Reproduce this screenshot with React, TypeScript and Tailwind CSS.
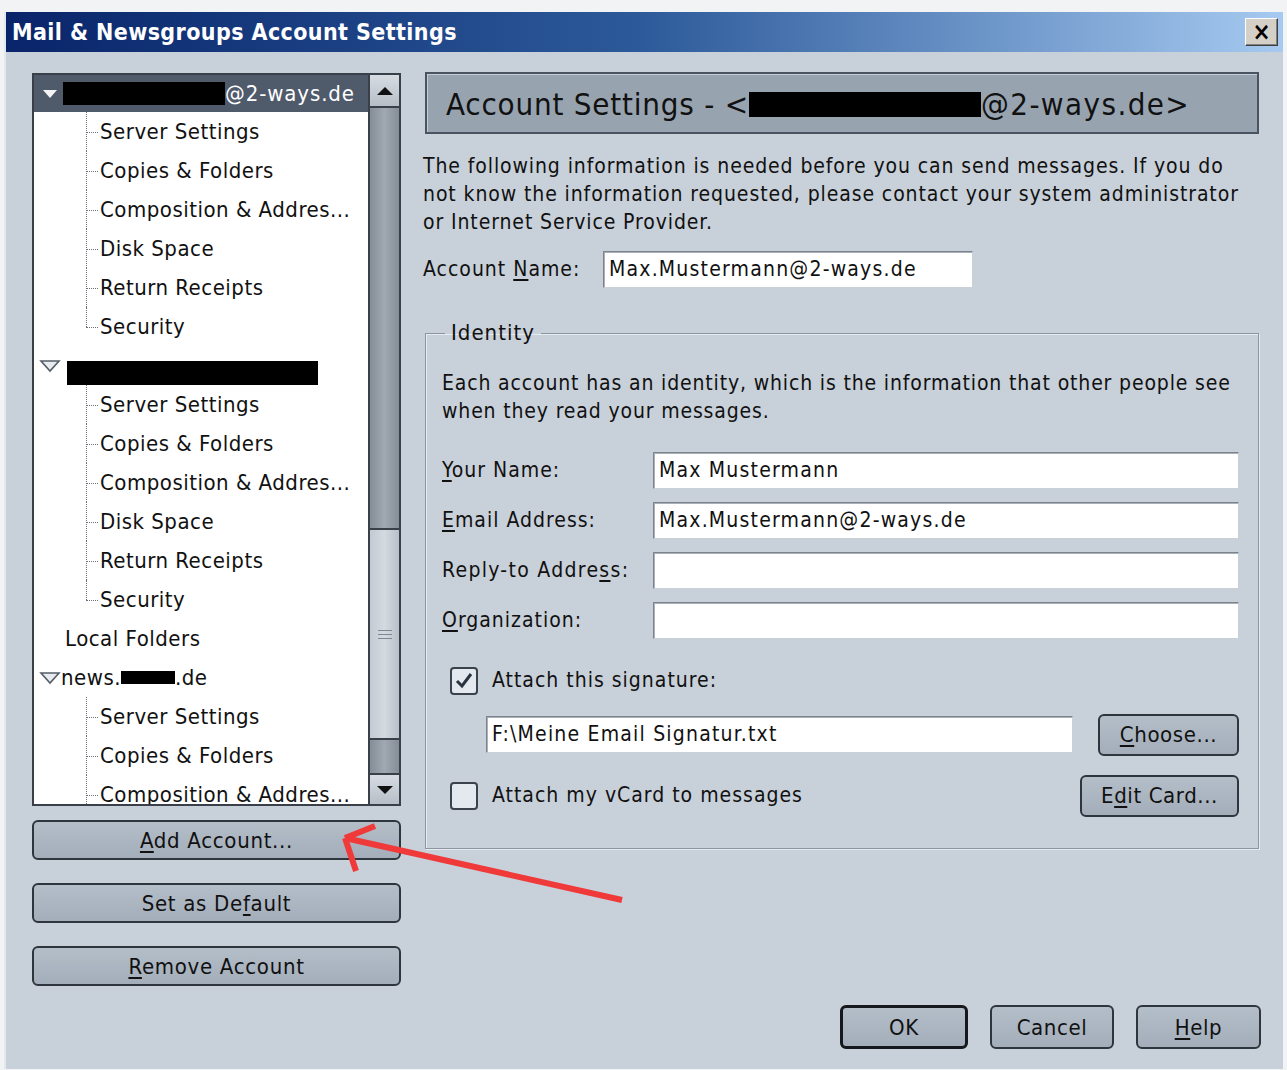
import React from "react";

const FONT = '"DejaVu Sans Condensed", "Liberation Sans", sans-serif';

function U({ children }: { children: React.ReactNode }) {
  return <span className="underline underline-offset-[3px]">{children}</span>;
}

function Bar({ w, h = 23 }: { w: number; h?: number }) {
  return <span className="inline-block bg-black align-middle" style={{ width: w, height: h }} />;
}

function TriangleOutline() {
  return (
    <svg width="22" height="14" viewBox="0 0 22 14" className="shrink-0">
      <path d="M2 2 L20 2 L11 12 Z" fill="#e8ecf0" stroke="#555d68" strokeWidth="1.6" />
    </svg>
  );
}

function Child({ label, last = false }: { label: string; last?: boolean }) {
  return (
    <div className="flex h-[39px] shrink-0 items-center">
      <div className="w-[52px] shrink-0" />
      <div className="relative h-full w-[14px] shrink-0">
        <div
          className={`absolute left-0 top-0 border-l border-dotted border-[#6b727c] ${last ? "h-1/2" : "h-full"}`}
        />
        <div className="absolute left-0 top-1/2 w-[12px] border-t border-dotted border-[#6b727c]" />
      </div>
      <span className="whitespace-nowrap">{label}</span>
    </div>
  );
}

function Children() {
  return (
    <>
      <Child label="Server Settings" />
      <Child label="Copies & Folders" />
      <Child label="Composition & Addres..." />
      <Child label="Disk Space" />
      <Child label="Return Receipts" />
      <Child label="Security" last />
    </>
  );
}

function SideButton({ children }: { children: React.ReactNode }) {
  return (
    <button className="flex h-[40px] w-full items-center justify-center rounded-[6px] border-2 border-[#2f353d] bg-gradient-to-b from-[#b4bec9] to-[#a3aeba] text-[22px] tracking-[0.7px] text-[#111]">
      {children}
    </button>
  );
}

function Button({
  children,
  w,
  h = 42,
  thick = false,
}: {
  children: React.ReactNode;
  w: number;
  h?: number;
  thick?: boolean;
}) {
  return (
    <button
      className={`flex shrink-0 items-center justify-center rounded-[6px] bg-gradient-to-b from-[#b4bec9] to-[#a3aeba] text-[22px] tracking-[0.6px] text-[#111] ${
        thick ? "border-[3px] border-[#15181c]" : "border-2 border-[#2f353d]"
      }`}
      style={{ width: w, height: h }}
    >
      {children}
    </button>
  );
}

function Field({ value, w }: { value?: string; w?: number }) {
  return (
    <div
      className="flex h-[37px] items-center whitespace-nowrap border border-[#7c838c] border-b-[#c9d0d7] border-r-[#c9d0d7] bg-white pl-[5px] text-[21px] tracking-[1.2px] text-[#111] shadow-[inset_1px_1px_0_#a9b0b8]"
      style={w ? { width: w } : { flex: 1 }}
    >
      {value}
    </div>
  );
}

function Check({ checked }: { checked?: boolean }) {
  return (
    <div className="flex h-[28px] w-[28px] shrink-0 items-center justify-center rounded-[4px] border-2 border-[#3b424b] bg-[#e3e9ee]">
      {checked && (
        <svg width="20" height="20" viewBox="0 0 20 20">
          <path d="M3 10 L8 15 L17 3" fill="none" stroke="#2b3440" strokeWidth="3" />
        </svg>
      )}
    </div>
  );
}

export default function App() {
  return (
    <div
      className="relative h-[1070px] w-[1287px] overflow-hidden bg-[#f2f3f4] text-[#111]"
      style={{ fontFamily: FONT }}
    >
      <div className="ml-[4px] mt-[12px] flex h-[1057px] w-[1279px] flex-col border-l-2 border-[#e3e8ee] bg-[#c8d0d9]">
        {/* title bar */}
        <div className="flex h-[40px] shrink-0 items-center justify-between bg-gradient-to-r from-[#0a246a] via-[#2d5a9a] to-[#a6caf0] pl-[6px] pr-[5px]">
          <span className="text-[23px] font-bold tracking-[0.4px] text-white">
            Mail &amp; Newsgroups Account Settings
          </span>
          <div className="flex h-[28px] w-[33px] items-center justify-center border border-b-[#404040] border-l-white border-r-[#404040] border-t-white bg-[#d4d0c8] text-[24px] font-bold leading-none text-black shadow-[inset_-1px_-1px_0_#808080]">
            ×
          </div>
        </div>

        {/* body */}
        <div className="flex flex-1 pl-[26px] pt-[20px]">
          {/* left column */}
          <div className="mt-[1px] flex w-[369px] shrink-0 flex-col">
            <div className="flex h-[733px] border-2 border-[#39404a] bg-white">
              <div className="flex min-w-0 flex-1 flex-col overflow-hidden text-[22px] tracking-[0.5px]">
                <div className="flex h-[37px] shrink-0 items-center bg-[#4f5a6b] pl-[8px] text-white">
                  <svg width="16" height="10" viewBox="0 0 16 10" className="mr-[5px] shrink-0">
                    <path d="M1 1 L15 1 L8 9 Z" fill="#f2f4f6" />
                  </svg>
                  <Bar w={162} />
                  <span className="whitespace-nowrap tracking-[0.9px]">@2-ways.de</span>
                </div>
                <Children />
                <div className="flex h-[39px] shrink-0 items-center pl-[5px]">
                  <TriangleOutline />
                  <span className="ml-[6px] mt-[14px] flex">
                    <Bar w={251} h={24} />
                  </span>
                </div>
                <Children />
                <div className="flex h-[39px] shrink-0 items-center pl-[31px]">Local Folders</div>
                <div className="flex h-[39px] shrink-0 items-center whitespace-nowrap pl-[5px]">
                  <TriangleOutline />
                  <span>news.</span>
                  <Bar w={54} h={13} />
                  <span>.de</span>
                </div>
                <Child label="Server Settings" />
                <Child label="Copies & Folders" />
                <Child label="Composition & Addres..." />
              </div>
              {/* scrollbar */}
              <div className="flex w-[31px] shrink-0 flex-col border-l-2 border-[#39404a] bg-[#8e97a1]">
                <div className="flex h-[33px] shrink-0 items-center justify-center border-b-2 border-[#39404a] bg-gradient-to-b from-[#d7dce2] to-[#b6bec7]">
                  <svg width="18" height="10" viewBox="0 0 18 10">
                    <path d="M1 9 L17 9 L9 1 Z" fill="#111" />
                  </svg>
                </div>
                <div className="h-[420px] shrink-0 bg-gradient-to-r from-[#858e98] via-[#a0a8b1] to-[#858e98]" />
                <div className="flex h-[212px] shrink-0 flex-col items-center justify-center gap-[3px] border-y-2 border-[#39404a] bg-gradient-to-r from-[#c3cad2] via-[#d4dae0] to-[#b7bfc8]">
                  <div className="h-[1px] w-[14px] bg-[#7e8792]" />
                  <div className="h-[1px] w-[14px] bg-[#7e8792]" />
                  <div className="h-[1px] w-[14px] bg-[#7e8792]" />
                </div>
                <div className="flex-1 bg-gradient-to-r from-[#858e98] via-[#a0a8b1] to-[#858e98]" />
                <div className="flex h-[31px] shrink-0 items-center justify-center border-t-2 border-[#39404a] bg-gradient-to-b from-[#d7dce2] to-[#b6bec7]">
                  <svg width="18" height="10" viewBox="0 0 18 10">
                    <path d="M1 1 L17 1 L9 9 Z" fill="#111" />
                  </svg>
                </div>
              </div>
            </div>
            <div className="mt-[14px] flex flex-col gap-[23px]">
              <SideButton>
                <span>
                  <U>A</U>dd Account...
                </span>
              </SideButton>
              <SideButton>
                <span>
                  Set as De<U>f</U>ault
                </span>
              </SideButton>
              <SideButton>
                <span>
                  <U>R</U>emove Account
                </span>
              </SideButton>
            </div>
          </div>

          {/* right column */}
          <div className="ml-[24px] flex w-[836px] shrink-0 flex-col">
            <div className="flex h-[62px] w-[834px] items-center border-2 border-[#4a5361] bg-[#98a3b0] pl-[19px] pt-[3px] text-[31px] tracking-[0.8px] text-[#111] shadow-[inset_1px_1px_0_#c4ccd5]">
              <span className="whitespace-nowrap">Account Settings - &lt;</span>
              <span className="flex">
                <Bar w={232} h={25} />
              </span>
              <span className="whitespace-nowrap tracking-[1.4px]">@2-ways.de&gt;</span>
            </div>

            <div className="-ml-[2px] mt-[18px] text-[21px] leading-[28px] tracking-[0.9px]">
              <div className="whitespace-nowrap">
                The following information is needed before you can send messages. If you do
              </div>
              <div className="whitespace-nowrap">
                not know the information requested, please contact your system administrator
              </div>
              <div className="whitespace-nowrap">or Internet Service Provider.</div>
            </div>

            <div className="-ml-[2px] mt-[15px] flex items-center text-[21px] tracking-[1px]">
              <span className="w-[180px] shrink-0">
                Account <U>N</U>ame:
              </span>
              <Field value="Max.Mustermann@2-ways.de" w={370} />
            </div>

            <fieldset className="mt-[31px] h-[530px] w-[834px] border border-[#8c96a2] shadow-[1px_1px_0_#e6ebf0,inset_1px_1px_0_#e6ebf0]">
              <legend className="ml-[19px] px-[6px] text-[22px] leading-[28px] tracking-[1px]">
                Identity
              </legend>
              <div className="flex flex-col pl-[16px] pr-[19px] pt-[22px] text-[21px] tracking-[1px]">
                <div className="leading-[28px] tracking-[0.85px]">
                  <div className="whitespace-nowrap">
                    Each account has an identity, which is the information that other people see
                  </div>
                  <div>when they read your messages.</div>
                </div>
                <div className="mt-[27px] flex flex-col gap-[13px]">
                  <div className="flex items-center">
                    <span className="w-[211px] shrink-0">
                      <U>Y</U>our Name:
                    </span>
                    <Field value="Max Mustermann" />
                  </div>
                  <div className="flex items-center">
                    <span className="w-[211px] shrink-0">
                      <U>E</U>mail Address:
                    </span>
                    <Field value="Max.Mustermann@2-ways.de" />
                  </div>
                  <div className="flex items-center">
                    <span className="w-[211px] shrink-0 tracking-[1.3px]">
                      Reply-to Addre<U>s</U>s:
                    </span>
                    <Field />
                  </div>
                  <div className="flex items-center">
                    <span className="w-[211px] shrink-0">
                      <U>O</U>rganization:
                    </span>
                    <Field />
                  </div>
                </div>
                <div className="ml-[8px] mt-[26px] flex items-center gap-[14px]">
                  <Check checked />
                  <span>Attach this signature:</span>
                </div>
                <div className="ml-[44px] mt-[17px] flex items-center justify-between">
                  <Field value="F:\Meine Email Signatur.txt" w={587} />
                  <Button w={141}>
                    <span>
                      <U>C</U>hoose...
                    </span>
                  </Button>
                </div>
                <div className="mt-[19px] flex items-center">
                  <div className="ml-[8px] flex items-center gap-[14px]">
                    <Check />
                    <span>Attach my vCard to messages</span>
                  </div>
                  <div className="ml-auto">
                    <Button w={159}>
                      <span>
                        E<U>d</U>it Card...
                      </span>
                    </Button>
                  </div>
                </div>
              </div>
            </fieldset>

            <div className="mt-[156px] flex justify-end gap-[22px]">
              <Button w={128} h={44} thick>
                OK
              </Button>
              <Button w={124} h={44}>
                Cancel
              </Button>
              <Button w={125} h={44}>
                <span>
                  <U>H</U>elp
                </span>
              </Button>
            </div>
          </div>
        </div>
      </div>

      {/* annotation arrow */}
      <svg
        className="pointer-events-none absolute left-0 top-0"
        width="1287"
        height="1070"
        viewBox="0 0 1287 1070"
      >
        <g stroke="#f03a3a" strokeWidth="6" strokeLinecap="butt" fill="none">
          <line x1="622" y1="900" x2="345" y2="838" />
          <line x1="345" y1="838" x2="375" y2="826" />
          <line x1="345" y1="838" x2="356" y2="871" />
        </g>
      </svg>
    </div>
  );
}
